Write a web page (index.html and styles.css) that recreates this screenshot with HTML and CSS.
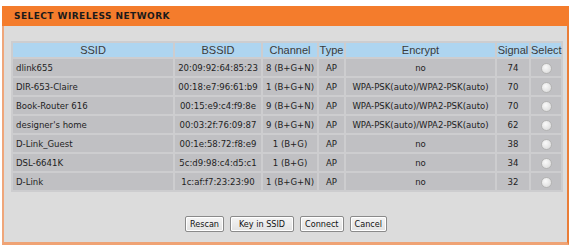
FILE: index.html
```html
<!DOCTYPE html>
<html lang="en">
<head>
    <meta charset="UTF-8">
    <title>Select Wireless Network</title>
    <link rel="stylesheet" href="styles.css">
</head>
<body>

<div class="panel">
    <div class="panel-title">SELECT WIRELESS NETWORK</div>

    <div class="panel-body">
        <table class="site-table">
            <tr>
                <th class="col-ssid">SSID</th>
                <th class="col-bssid">BSSID</th>
                <th class="col-channel">Channel</th>
                <th class="col-type">Type</th>
                <th class="col-encrypt">Encrypt</th>
                <th class="col-signal">Signal</th>
                <th class="col-select">Select</th>
            </tr>
            <tr>
                <td class="ssid">dlink655</td>
                <td>20:09:92:64:85:23</td>
                <td>8 (B+G+N)</td>
                <td>AP</td>
                <td>no</td>
                <td>74</td>
                <td><span class="radio"></span></td>
            </tr>
            <tr>
                <td class="ssid">DIR-653-Claire</td>
                <td>00:18:e7:96:61:b9</td>
                <td>1 (B+G+N)</td>
                <td>AP</td>
                <td>WPA-PSK(auto)/WPA2-PSK(auto)</td>
                <td>70</td>
                <td><span class="radio"></span></td>
            </tr>
            <tr>
                <td class="ssid">Book-Router 616</td>
                <td>00:15:e9:c4:f9:8e</td>
                <td>9 (B+G+N)</td>
                <td>AP</td>
                <td>WPA-PSK(auto)/WPA2-PSK(auto)</td>
                <td>70</td>
                <td><span class="radio"></span></td>
            </tr>
            <tr>
                <td class="ssid">designer's home</td>
                <td>00:03:2f:76:09:87</td>
                <td>9 (B+G+N)</td>
                <td>AP</td>
                <td>WPA-PSK(auto)/WPA2-PSK(auto)</td>
                <td>62</td>
                <td><span class="radio"></span></td>
            </tr>
            <tr>
                <td class="ssid">D-Link_Guest</td>
                <td>00:1e:58:72:f8:e9</td>
                <td>1 (B+G)</td>
                <td>AP</td>
                <td>no</td>
                <td>38</td>
                <td><span class="radio"></span></td>
            </tr>
            <tr>
                <td class="ssid">DSL-6641K</td>
                <td>5c:d9:98:c4:d5:c1</td>
                <td>1 (B+G)</td>
                <td>AP</td>
                <td>no</td>
                <td>34</td>
                <td><span class="radio"></span></td>
            </tr>
            <tr>
                <td class="ssid">D-Link</td>
                <td>1c:af:f7:23:23:90</td>
                <td>1 (B+G+N)</td>
                <td>AP</td>
                <td>no</td>
                <td>32</td>
                <td><span class="radio"></span></td>
            </tr>
        </table>

        <div class="button-row">
            <button class="btn btn-rescan">Rescan</button>
            <button class="btn btn-key">Key in SSID</button>
            <button class="btn btn-connect">Connect</button>
            <button class="btn btn-cancel">Cancel</button>
        </div>
    </div>
</div>

</body>
</html>
```

FILE: styles.css
```css
body {
    margin: 0;
    background-color: #ffffff;
    font-family: Tahoma, 'DejaVu Sans', sans-serif;
}

.panel {
    margin: 6px 0 0 2px;
    width: 563px;
    border-left: 2px solid #efa67a;
    border-right: 2px solid #ea7d36;
    border-bottom: 3px solid #efa375;
    background-color: #dcdcdc;
}

.panel-title {
    height: 20px;
    line-height: 20px;
    background-color: #f47c2c;
    font-family: 'DejaVu Sans', sans-serif;
    font-size: 9px;
    font-weight: bold;
    letter-spacing: 0.45px;
    color: #1a1a1a;
    margin-left: -2px;
    margin-right: -2px;
    padding-left: 12px;
}

.panel-body {
    padding: 15px 6px 10px 7px;
}

/* site survey table */
.site-table {
    width: 548px;
    border-collapse: separate;
    border-spacing: 2px;
    background-color: #cdcdcf;
    table-layout: fixed;
}

.site-table th {
    background-color: #aed5f0;
    font-family: 'Liberation Sans', Arial, sans-serif;
    font-size: 11px;
    font-weight: normal;
    color: #3a3a3a;
    height: 14px;
    padding: 0;
}

.site-table td {
    background-color: #c0c0c3;
    font-family: 'DejaVu Sans Condensed', 'DejaVu Sans', sans-serif;
    font-size: 9.5px;
    color: #1e1e1e;
    height: 17px;
    padding: 0;
    text-align: center;
    white-space: nowrap;
}

.site-table td.ssid {
    text-align: left;
    padding-left: 3px;
}

.col-ssid { width: 160px; }
.col-bssid { width: 86px; }
.col-channel { width: 54px; }
.col-type { width: 25px; }
.col-encrypt { width: 149px; }
.col-signal { width: 32px; }
.col-select { width: 30px; }

.radio {
    display: inline-block;
    width: 9px;
    height: 9px;
    border-radius: 50%;
    border: 1px solid #b4b4b4;
    background: radial-gradient(circle at 40% 35%, #fafafa, #d6d6d6);
    vertical-align: middle;
}

.button-row {
    display: flex;
    justify-content: center;
    gap: 6px;
    margin-top: 24px;
}

.btn {
    height: 16px;
    padding: 0 4px;
    font-family: 'DejaVu Sans Condensed', 'DejaVu Sans', sans-serif;
    font-size: 9px;
    color: #111;
    background: linear-gradient(#f4f4f4, #e2e2e2);
    border: 1px solid #8a8a8a;
    border-radius: 2px;
    box-shadow: inset 0 0 0 1px #ffffff;
}

.btn-key {
    padding: 0 8px;
}
```
